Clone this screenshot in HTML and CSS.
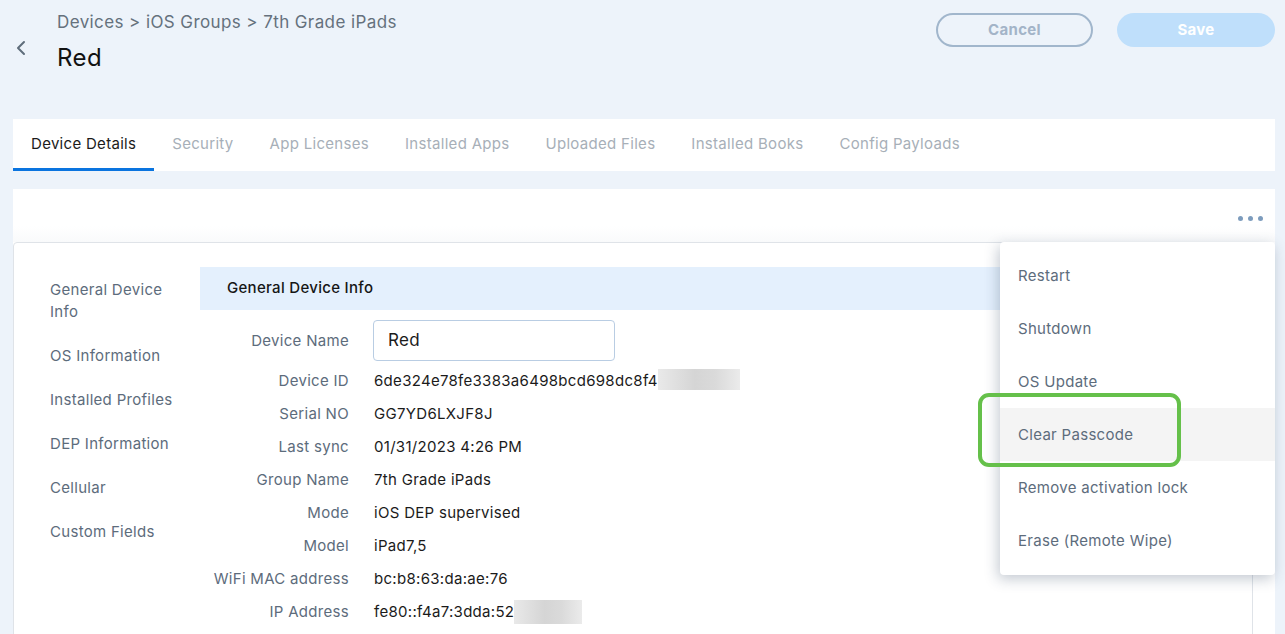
FILE: index.html
```html
<!DOCTYPE html>
<html lang="en">
<head>
<meta charset="utf-8">
<title>Red - Device Details</title>
<link rel="stylesheet" href="styles.css">
</head>
<body>
<div class="page">
  <header class="top">
    <button class="back" aria-label="Back">
      <svg width="12" height="16" viewBox="0 0 12 16"><path d="M9 2 L3 8 L9 14" fill="none" stroke="#5f6d7b" stroke-width="2" stroke-linecap="round" stroke-linejoin="round"/></svg>
    </button>
    <div class="titles">
      <div class="crumbs">Devices &gt; iOS Groups &gt; 7th Grade iPads</div>
      <h1 class="title">Red</h1>
    </div>
    <div class="actions">
      <button class="btn cancel">Cancel</button>
      <button class="btn save">Save</button>
    </div>
  </header>

  <nav class="tabs">
    <a class="tab active">Device Details</a>
    <a class="tab">Security</a>
    <a class="tab">App Licenses</a>
    <a class="tab">Installed Apps</a>
    <a class="tab">Uploaded Files</a>
    <a class="tab">Installed Books</a>
    <a class="tab">Config Payloads</a>
  </nav>

  <section class="panel">
    <div class="toolbar">
      <button class="more" aria-label="More actions"><span></span><span></span><span></span></button>
    </div>
    <div class="card">
      <aside class="side">
        <div class="side-item">General Device Info</div>
        <div class="side-item">OS Information</div>
        <div class="side-item">Installed Profiles</div>
        <div class="side-item">DEP Information</div>
        <div class="side-item">Cellular</div>
        <div class="side-item">Custom Fields</div>
      </aside>
      <div class="content">
        <div class="sec-head">General Device Info</div>
        <div class="rows">
          <div class="label">Device Name</div>
          <div class="value"><div class="input">Red</div></div>
          <div class="label">Device ID</div>
          <div class="value">6de324e78fe3383a6498bcd698dc8f4<span class="redact r1"></span></div>
          <div class="label">Serial NO</div>
          <div class="value">GG7YD6LXJF8J</div>
          <div class="label">Last sync</div>
          <div class="value">01/31/2023 4:26 PM</div>
          <div class="label">Group Name</div>
          <div class="value">7th Grade iPads</div>
          <div class="label">Mode</div>
          <div class="value">iOS DEP supervised</div>
          <div class="label">Model</div>
          <div class="value">iPad7,5</div>
          <div class="label">WiFi MAC address</div>
          <div class="value">bc:b8:63:da:ae:76</div>
          <div class="label">IP Address</div>
          <div class="value">fe80::f4a7:3dda:52<span class="redact r2"></span></div>
        </div>
      </div>
    </div>

    <div class="menu">
      <div class="menu-item">Restart</div>
      <div class="menu-item">Shutdown</div>
      <div class="menu-item">OS Update</div>
      <div class="menu-item hover">Clear Passcode</div>
      <div class="menu-item">Remove activation lock</div>
      <div class="menu-item">Erase (Remote Wipe)</div>
    </div>
    <div class="callout"></div>
  </section>
</div>
</body>
</html>
```

FILE: styles.css
```css
* { box-sizing: border-box; }
html, body { margin: 0; padding: 0; }
body {
  background: #edf3fa;
  font-family: Inter, "Open Sans", "Liberation Sans", sans-serif;
  letter-spacing: 0.3px;
  color: #1b1b1b;
  width: 1285px;
  height: 634px;
  overflow: hidden;
}
.page { position: relative; }

.top {
  display: flex;
  align-items: flex-start;
  height: 119px;
}
.back {
  border: 0;
  background: none;
  padding: 0;
  margin: 40px 0 0 15px;
  width: 12px;
  height: 16px;
  display: flex;
}
.titles { margin: 10px 0 0 30px; flex: 1; }
.crumbs {
  font-size: 17px;
  line-height: 24px;
  letter-spacing: 0.4px;
  color: #65717d;
}
.title {
  margin: 10px 0 0;
  font-size: 24px;
  line-height: 28px;
  font-weight: 400;
  letter-spacing: 0.4px;
  color: #121212;
}
.actions {
  display: flex;
  gap: 24px;
  margin: 13px 10px 0 0;
}
.btn {
  height: 34px;
  border-radius: 17px;
  font-family: inherit;
  font-size: 15px;
  font-weight: 700;
  letter-spacing: 0.3px;
  line-height: 30px;
  padding: 0;
}
.cancel {
  width: 157px;
  background: transparent;
  border: 2px solid #a1b6cc;
  color: #a3b4c8;
}
.save {
  width: 158px;
  background: #bfdffb;
  border: 0;
  color: #ffffff;
}

.tabs {
  display: flex;
  margin: 0 10px 0 13px;
  height: 52px;
  background: #fff;
}
.tab {
  padding: 0 18px;
  font-size: 15px;
  line-height: 49px;
  color: #a7afb8;
  border-bottom: 3px solid transparent;
}
.tab.active {
  color: #1b1b1b;
  border-bottom-color: #0a74df;
}

.panel {
  position: relative;
  margin: 18px 10px 0 13px;
  background: #fff;
  height: 445px;
}
.toolbar {
  height: 53px;
  display: flex;
  justify-content: flex-end;
  align-items: center;
  padding-right: 12px;
  background: linear-gradient(#ffffff 70%, #f9fafb);
}
.more {
  border: 0;
  background: none;
  padding: 0;
  display: flex;
  gap: 5px;
  margin-top: 5px;
}
.more span {
  width: 5px;
  height: 5px;
  border-radius: 50%;
  background: #7d9cbd;
}

.card {
  display: flex;
  margin-right: 22px;
  height: 400px;
  border: 1px solid #dfe3e8;
  border-radius: 4px;
  background: #fff;
}
.side {
  width: 186px;
  flex: none;
  padding: 36px 26px 0 36px;
}
.side-item {
  font-size: 15px;
  line-height: 22px;
  color: #5d6c7c;
  margin-bottom: 22px;
}
.content { flex: 1; padding-top: 24px; }
.sec-head {
  height: 43px;
  background: #e4f0fd;
  padding-left: 27px;
  font-size: 15px;
  line-height: 42px;
  font-weight: 450;
  color: #161616;
}
.rows {
  display: grid;
  grid-template-columns: 149px 1fr;
  grid-template-rows: 47px;
  grid-auto-rows: 33px;
  column-gap: 25px;
  margin-top: 7px;
  align-items: center;
  font-size: 15px;
}
.label { text-align: right; color: #5d6c7c; }
.value { color: #1b1b1b; display: flex; align-items: center; }
.input {
  width: 242px;
  height: 41px;
  margin-left: -1px;
  border: 1px solid #b9cde3;
  border-radius: 4px;
  padding-left: 14px;
  font-size: 17px;
  line-height: 39px;
  color: #1b1b1b;
}
.redact {
  display: inline-block;
  background: linear-gradient(90deg, #e9e9e9, #d5d5d5 45%, #dadada 70%, #ebebeb);
}
.r1 { width: 82px; height: 21px; margin-top: -2px; }
.r2 { width: 68px; height: 24px; }

.menu {
  position: absolute;
  top: 53px;
  right: 0;
  width: 275px;
  background: #fff;
  border-radius: 4px;
  padding: 7px 0 8px;
  box-shadow: -2px 4px 14px rgba(40, 60, 90, 0.28);
}
.menu-item {
  height: 53px;
  line-height: 53px;
  padding-left: 18px;
  font-size: 15px;
  color: #5d6c7c;
}
.menu-item.hover { background: #f4f4f4; }

.callout {
  position: absolute;
  left: 965px;
  top: 204px;
  width: 203px;
  height: 74px;
  border: 4px solid #65c04a;
  border-radius: 11px;
}
```
